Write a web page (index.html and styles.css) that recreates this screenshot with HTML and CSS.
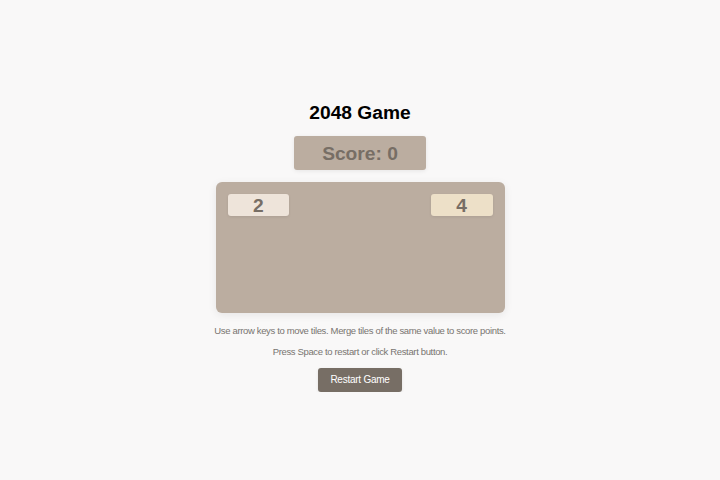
FILE: index.html
```html
<!DOCTYPE html>
<html>
<head>
<meta charset="utf-8">
<link rel="stylesheet" href="styles.css">
</head>
<body>
<main class="game">
  <h1 class="title">2048 Game</h1>
  <div class="score">Score: 0</div>
  <div class="board">
    <div class="tile t2">2</div>
    <div class="cell"></div>
    <div class="cell"></div>
    <div class="tile t4">4</div>
    <div class="cell"></div><div class="cell"></div><div class="cell"></div><div class="cell"></div>
    <div class="cell"></div><div class="cell"></div><div class="cell"></div><div class="cell"></div>
    <div class="cell"></div><div class="cell"></div><div class="cell"></div><div class="cell"></div>
  </div>
  <p class="info first">Use arrow keys to move tiles. Merge tiles of the same value to score points.</p>
  <p class="info second">Press Space to restart or click Restart button.</p>
  <button class="restart">Restart Game</button>
</main>
</body>
</html>
```
FILE: styles.css
```css
html, body {
  margin: 0;
  padding: 0;
  background: #f9f8f8;
  font-family: "Liberation Sans", Arial, sans-serif;
}
.game {
  display: flex;
  flex-direction: column;
  align-items: center;
  padding-top: 101px;
}
.title {
  margin: 0;
  font-size: 19.2px;
  line-height: 24px;
  font-weight: bold;
  color: #000;
}
.score {
  margin-top: 11px;
  width: 132px;
  height: 34px;
  line-height: 35px;
  text-align: center;
  background: #bbada0;
  color: #776e65;
  font-size: 19.2px;
  font-weight: bold;
  border-radius: 3px;
  box-shadow: 0 1px 4px rgba(0,0,0,0.08);
}
.board {
  margin-top: 12px;
  width: 289px;
  height: 131px;
  box-sizing: border-box;
  padding: 12px;
  background: #bbada0;
  border-radius: 6px;
  display: grid;
  grid-template-columns: repeat(4, 1fr);
  grid-template-rows: repeat(4, 22px);
  column-gap: 6px;
  row-gap: 6px;
  box-shadow: 0 2px 8px rgba(0,0,0,0.08);
}
.tile {
  height: 22px;
  line-height: 23px;
  text-align: center;
  font-size: 19.2px;
  font-weight: bold;
  color: #776e65;
  border-radius: 3px;
  box-shadow: 0 1px 3px rgba(0,0,0,0.08);
}
.t2 { background: #eee4da; }
.t4 { background: #ede0c8; }
.info {
  margin: 0;
  font-size: 9.5px;
  letter-spacing: -0.35px;
  line-height: 12px;
  color: #787470;
}
.info.first { margin-top: 12px; }
.info.second { margin-top: 9px; }
.restart {
  margin-top: 10px;
  height: 24px;
  padding: 0 12px;
  border: none;
  border-radius: 3px;
  background: #776e65;
  color: #fff;
  font-family: "Liberation Sans", Arial, sans-serif;
  font-size: 10px;
  letter-spacing: -0.25px;
  line-height: 24px;
  box-shadow: 0 1px 3px rgba(0,0,0,0.1);
}
```
